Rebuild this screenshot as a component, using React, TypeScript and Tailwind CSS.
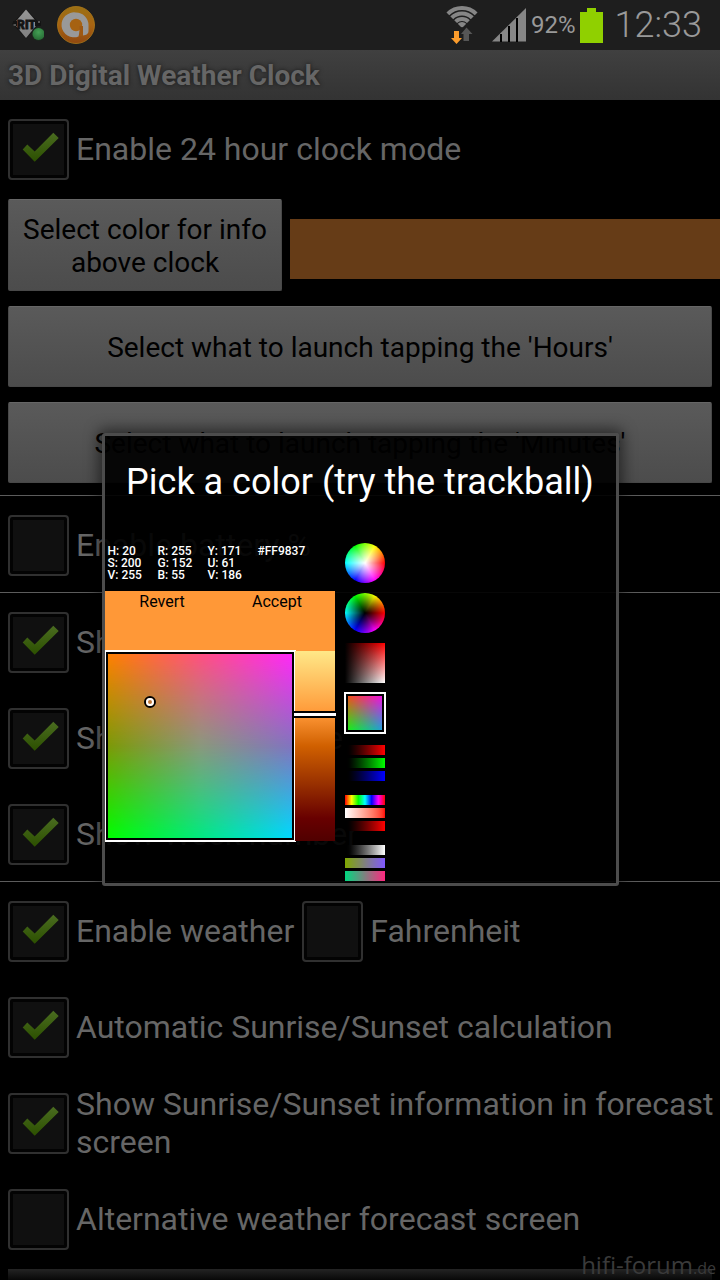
import { useState } from "react";
import type { ReactNode } from "react";
import clsx from "clsx";

const colorInfo = [
  ["H: 20", "S: 200", "V: 255"],
  ["R: 255", "G: 152", "B: 55"],
  ["Y: 171", "U: 61", "V: 186"],
  ["#FF9837"],
];

const barGroups = [
  {
    label: "RGB sliders",
    bars: [
      "bg-linear-to-r from-black to-[#ff0000]",
      "bg-linear-to-r from-black to-[#00ff00]",
      "bg-linear-to-r from-black to-[#0000ff]",
    ],
  },
  {
    label: "HSV sliders",
    bars: [
      "bg-[linear-gradient(to_right,#f00,#ff0,#0f0,#0ff,#00f,#f0f,#f00)]",
      "bg-linear-to-r from-white to-[#ff0000]",
      "bg-linear-to-r from-black to-[#ff0000]",
    ],
  },
  {
    label: "YUV sliders",
    bars: [
      "bg-linear-to-r from-black to-white",
      "bg-[linear-gradient(to_right,#80a800,#8058ff)]",
      "bg-[linear-gradient(to_right,#00d880,#ff2880)]",
    ],
  },
];

const StatusBar = () => (
  <header className="flex h-[50px] shrink-0 items-center justify-between bg-[#1e1e1e] pl-3 pr-[18px]">
    <div className="flex items-center gap-3">
      <svg className="h-10 w-8" viewBox="0 0 32 40" aria-hidden="true">
        <defs>
          <linearGradient id="diamond" x1="0" y1="0" x2="0" y2="1">
            <stop offset="0" stopColor="#969696" />
            <stop offset="1" stopColor="#808080" />
          </linearGradient>
          <radialGradient id="dot" cx="0.5" cy="0.35" r="0.6">
            <stop offset="0" stopColor="#43a054" />
            <stop offset="1" stopColor="#2a7038" />
          </radialGradient>
        </defs>
        <path d="M14 4L28 18.500L14 33.500L0 18.500Z" fill="#161616" />
        <path d="M14 4.500L26 18.500L14 33L2 18.500Z" fill="url(#diamond)" />
        <path d="M1 18.500H5M23 18.500H29" stroke="#141414" strokeWidth="5" />
        <path d="M1.500 20H4M26 17H28" stroke="#6a6a6a" strokeWidth="1.500" />
        <text x="14.500" y="24" textAnchor="middle" fontFamily="Roboto, sans-serif" fontWeight="900" fontSize="12" fill="#141414" stroke="#141414" strokeWidth="0.800">RIT</text>
        <circle cx="26.500" cy="29" r="6.800" fill="#1c2c1e" />
        <circle cx="26.500" cy="29" r="6" fill="url(#dot)" />
      </svg>
      <svg className="h-10 w-10" viewBox="0 0 40 40" aria-hidden="true">
        <defs>
          <linearGradient id="avast" x1="0" y1="0" x2="0" y2="1">
            <stop offset="0" stopColor="#9a7014" />
            <stop offset="0.500" stopColor="#a86412" />
            <stop offset="1" stopColor="#904810" />
          </linearGradient>
        </defs>
        <circle cx="20" cy="20" r="18.500" fill="url(#avast)" stroke="#b07a18" strokeWidth="0.800" />
        <path d="M32.500 20V26C32.500 29 30 30 27 30.500V20Z" fill="#999" />
        <path d="M20 7.500A12.500 12.500 0 1 0 22.500 31.500L24 25L27 25V20H32.500A12.500 12.500 0 0 0 20 7.500Z" fill="#999" />
        <circle cx="20" cy="20" r="6.200" fill="#a66212" />
        <path d="M23.500 21H27V31H23.500Z" fill="#9e5812" />
      </svg>
    </div>
    <div className="flex items-center gap-1 text-[#999999]">
      <svg className="mr-2 h-[38px] w-9" viewBox="0 0 36 38" aria-hidden="true">
        <clipPath id="wifi"><path d="M18 22L-4 0V-4H40V0Z" /></clipPath>
        <g clipPath="url(#wifi)" fill="none" stroke="#868686" strokeWidth="4">
          <circle cx="18" cy="22" r="20" />
          <circle cx="18" cy="22" r="14.500" />
          <circle cx="18" cy="22" r="9" />
          <circle cx="18" cy="22" r="2.500" strokeWidth="7" />
        </g>
        <path d="M10 25H15V32H18L12.500 38L7 32H10Z" fill="#fb9c2c" />
        <path d="M22.500 21.500L28.500 28H25V35H19.500V28H17Z" fill="#565656" />
      </svg>
      <svg className="h-[34px] w-[34px]" viewBox="0 0 34 34" aria-hidden="true">
        <path d="M0 33.500L34 0V33.500Z" fill="#868686" />
        <path d="M8 26h2v8h-2zM16 18h2v16h-2zM24 10h2v24h-2z" fill="#000" />
      </svg>
      <span className="ml-px text-[24px]">92%</span>
      <svg className="h-9 w-[23px]" viewBox="0 0 23 36" aria-hidden="true">
        <path d="M7 1H16V5H23V36H0V5H7Z" fill="#90d000" />
      </svg>
      <span className="ml-2 text-[36px] font-light">12:33</span>
    </div>
  </header>
);

const Checkbox = ({ label, initial = false }: { label: string; initial?: boolean }) => {
  const [checked, setChecked] = useState(initial);

  return (
    <label className="flex items-center gap-[7px] text-[32px] leading-[38px]">
      <span className="relative h-[61px] w-[61px] shrink-0">
        <input
          type="checkbox"
          checked={checked}
          onChange={() => setChecked(!checked)}
          className="block h-full w-full appearance-none rounded-[4px] border-2 border-[#303030] bg-[#101010] shadow-[inset_0_0_0_3px_#030303]"
        />
        {
          checked && (
            <svg className="pointer-events-none absolute inset-0" viewBox="0 0 61 61" aria-hidden="true">
              <defs>
                <linearGradient id="tick" x1="0" y1="0" x2="0" y2="1">
                  <stop offset="0" stopColor="#4a6c20" />
                  <stop offset="1" stopColor="#2c5000" />
                </linearGradient>
              </defs>
              <path d="M14.700 30.500L19.300 25.500L26.700 32.500L45.300 13.800L50.700 19L26.700 42.800Z" fill="url(#tick)" />
            </svg>
          )
        }
      </span>
      <span className="pb-[2px]">{label}</span>
    </label>
  );
};

const Row = ({ children }: { children: ReactNode }) => (
  <div className="flex h-24 shrink-0 items-center gap-2 pl-2 pt-[3px]">{children}</div>
);

const Divider = () => <hr className="h-px shrink-0 border-0 bg-[#5c5c5c]" />;

const GrayButton = ({ children, className }: { children: ReactNode; className: string }) => (
  <button
    className={clsx(
      "rounded-[2px] border border-[#484848] border-t-[#666666] bg-linear-to-b from-[#5a5a5a] to-[#4c4c4c] pt-[2px] text-[28px] leading-[33px] text-black",
      className
    )}
  >
    {children}
  </button>
);

const ColorPlane = () => (
  <div className="w-[190px] p-px">
    <div className="relative h-[188px] border-2 border-black bg-[linear-gradient(to_right,#7c9a08,#8a997c,#8274c0)] outline-2 outline-white">
      <div className="absolute inset-0 bg-[linear-gradient(to_right,#ff8000,#ff5080,#ff28f8)] [mask-image:linear-gradient(to_bottom,black,transparent_50%)]" />
      <div className="absolute inset-0 bg-[linear-gradient(to_right,#00ff00,#00ea80,#00d8ff)] [mask-image:linear-gradient(to_top,black,transparent_50%)]" />
      <svg className="absolute left-9 top-[42px] h-3 w-3" viewBox="0 0 12 12" aria-hidden="true">
        <circle cx="6" cy="6" r="5" fill="#c07838" stroke="#000" strokeWidth="2" />
        <circle cx="6" cy="6" r="3" fill="none" stroke="#fff" strokeWidth="2" />
      </svg>
    </div>
  </div>
);

const PickerModes = () => (
  <div className="flex flex-col gap-[10px]">
    <button
      aria-label="Hue and saturation wheel"
      className="h-10 w-10 rounded-full bg-[radial-gradient(closest-side,white,transparent),conic-gradient(from_90deg,#f00,#f0f,#00f,#0ff,#0f0,#ff0,#f00)]"
    />
    <button
      aria-label="Hue and value wheel"
      className="h-10 w-10 rounded-full bg-[radial-gradient(closest-side,black,transparent),conic-gradient(from_90deg,#f00,#f0f,#00f,#0ff,#0f0,#ff0,#f00)]"
    />
    <button
      aria-label="Saturation and value square"
      className="h-10 w-10 bg-[linear-gradient(to_right,black,transparent),linear-gradient(to_bottom,#f00,#fff)]"
    />
    <button
      aria-label="UV plane"
      className="relative h-10 w-10 border-[3px] border-black bg-[linear-gradient(to_right,#18f018,#20a0d8)] outline-2 -outline-offset-1 outline-white"
    >
      <span className="absolute inset-0 bg-[linear-gradient(to_right,#f05018,#f010e0)] [mask-image:linear-gradient(to_bottom,black,transparent)]" />
    </button>
    {
      barGroups.map((group) => (
        <button key={group.label} aria-label={group.label} className="flex h-10 w-10 flex-col gap-[3px] pt-[2px]">
          {group.bars.map((bar) => <span key={bar} className={clsx("h-[10px] w-full", bar)} />)}
        </button>
      ))
    }
  </div>
);

const ColorDialog = () => {
  const [luma, setLuma] = useState(33);

  return (
    <div
      role="dialog"
      aria-labelledby="dialog-title"
      className="w-[517px] max-w-full overflow-hidden rounded-[3px] border-[3px] border-[#4c4c4c] bg-black/92 shadow-[0_0_14px_4px_rgba(0,0,0,0.5)]"
    >
      <h2 id="dialog-title" className="mb-[14px] h-[93px] whitespace-nowrap text-center text-[36px] leading-[93px] text-white">
        Pick a color (try the trackball)
      </h2>
      <div className="flex gap-[10px]">
        <div className="w-[230px] pt-[2px]">
          <div className="mb-[10px] flex h-9 pl-[3px] text-xs leading-[12px] text-white">
            {
              colorInfo.map((column) => (
                <div key={column[0]} className="w-[50px] font-medium">
                  {column.map((value) => <p key={value}>{value}</p>)}
                </div>
              ))
            }
          </div>
          <div className="flex h-[60px] bg-[#ff9837] text-base leading-[22px] text-black">
            <button className="flex flex-1 justify-center">Revert</button>
            <button className="flex flex-1 justify-center">Accept</button>
          </div>
          <div className="flex">
            <ColorPlane />
            <input
              type="range"
              aria-label="Luma"
              value={luma}
              onChange={(e) => setLuma(Number(e.target.value))}
              className="relative h-[190px] w-10 appearance-none bg-[linear-gradient(to_bottom,#ffe888,#ff9837_33%,#d06000_50%,#983000_70%,#680000_88%,#500000)] [writing-mode:vertical-lr] [&::-webkit-slider-thumb]:h-[7px] [&::-webkit-slider-thumb]:w-[42px] [&::-webkit-slider-thumb]:appearance-none [&::-webkit-slider-thumb]:rounded-none [&::-webkit-slider-thumb]:border-0 [&::-webkit-slider-thumb]:bg-[linear-gradient(to_bottom,black_2px,white_2px,white_5px,black_5px)]"
            />
          </div>
        </div>
        <PickerModes />
      </div>
    </div>
  );
};

const App = () => {
  return (
    <div className="relative flex h-screen flex-col overflow-hidden bg-black font-[Roboto,sans-serif] text-[#666666]">
      <StatusBar />
      <h1 className="h-[50px] shrink-0 bg-linear-to-b from-[#404040] to-[#333333] pl-2 text-[28px] font-bold leading-[52px] [text-shadow:0_0_4px_#181818]">
        3D Digital Weather Clock
      </h1>

      <main className="flex min-h-0 flex-1 flex-col overflow-hidden">
        <Row><Checkbox label="Enable 24 hour clock mode" initial /></Row>

        <div className="flex shrink-0 flex-col gap-[15px] pb-3 pt-[3px]">
          <div className="flex gap-2 pl-2">
            <GrayButton className="h-[92px] w-[274px] px-2">Select color for info above clock</GrayButton>
            <div className="mt-5 h-[60px] flex-1 bg-[#663c17]" />
          </div>
          <GrayButton className="mx-2 h-[81px]">Select what to launch tapping the 'Hours'</GrayButton>
          <GrayButton className="mx-2 h-[81px]">Select what to launch tapping the 'Minutes'</GrayButton>
        </div>

        <Divider />
        <Row><Checkbox label="Enable battery %" /></Row>
        <Divider />
        <Row><Checkbox label="Show date" initial /></Row>
        <Row><Checkbox label="Show Month name" initial /></Row>
        <Row><Checkbox label="Show Week number" initial /></Row>
        <Divider />
        <Row>
          <Checkbox label="Enable weather" initial />
          <Checkbox label="Fahrenheit" />
        </Row>
        <Row><Checkbox label="Automatic Sunrise/Sunset calculation" initial /></Row>
        <Row><Checkbox label="Show Sunrise/Sunset information in forecast screen" initial /></Row>
        <Row><Checkbox label="Alternative weather forecast screen" /></Row>
        <div className="mx-2 mt-[3px] h-[11px] shrink-0 bg-linear-to-b from-[#242424] to-[#080808]" />
      </main>

      {/* Watermark */}
      <p className="absolute bottom-0 right-1 font-['Open_Sans',sans-serif] text-[24px] leading-[26px] text-[#3a3a3a]">
        hifi-forum<span className="text-base">.de</span>
      </p>

      {/* Color picker */}
      <div className="absolute inset-0 flex items-center justify-center pt-[39px]">
        <ColorDialog />
      </div>
    </div>
  );
};

export default App;
